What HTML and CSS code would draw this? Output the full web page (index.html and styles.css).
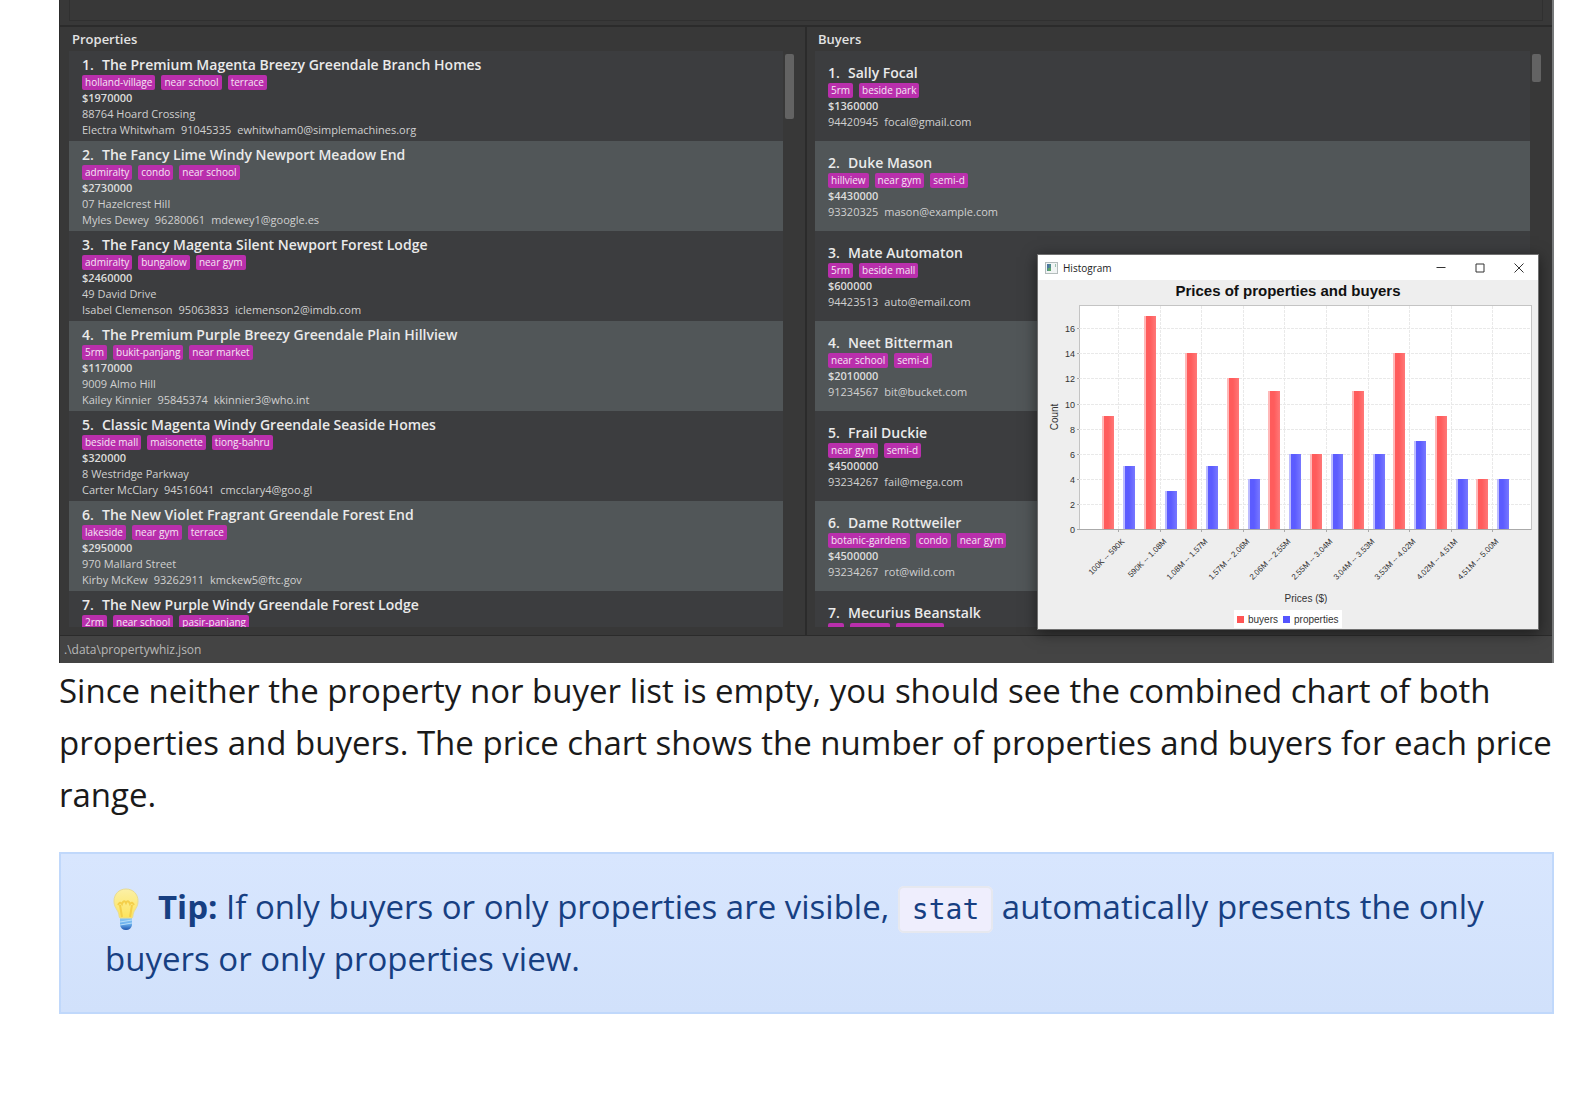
FILE: index.html
```html
<!DOCTYPE html>
<html lang="en">
<head>
<meta charset="utf-8">
<title>PropertyWhiz User Guide</title>
<link rel="stylesheet" href="styles.css">
</head>
<body>
<main class="page">
<section class="app">
  <div class="result"><div class="result-box"></div></div>
  <div class="panels">
    <section class="panel">
      <h2 class="panel-title">Properties</h2>
      <div class="list-wrap">
        <ol class="list">
          <li class="row"><h3 class="name"><span class="num">1.</span>The Premium Magenta Breezy Greendale Branch Homes</h3><div class="tags"><span class="tag">holland-village</span><span class="tag">near school</span><span class="tag">terrace</span></div><p class="price">$1970000</p><p class="line">88764 Hoard Crossing</p><p class="line"><span>Electra Whitwham</span><span>91045335</span><span>ewhitwham0@simplemachines.org</span></p></li>
          <li class="row"><h3 class="name"><span class="num">2.</span>The Fancy Lime Windy Newport Meadow End</h3><div class="tags"><span class="tag">admiralty</span><span class="tag">condo</span><span class="tag">near school</span></div><p class="price">$2730000</p><p class="line">07 Hazelcrest Hill</p><p class="line"><span>Myles Dewey</span><span>96280061</span><span>mdewey1@google.es</span></p></li>
          <li class="row"><h3 class="name"><span class="num">3.</span>The Fancy Magenta Silent Newport Forest Lodge</h3><div class="tags"><span class="tag">admiralty</span><span class="tag">bungalow</span><span class="tag">near gym</span></div><p class="price">$2460000</p><p class="line">49 David Drive</p><p class="line"><span>Isabel Clemenson</span><span>95063833</span><span>iclemenson2@imdb.com</span></p></li>
          <li class="row"><h3 class="name"><span class="num">4.</span>The Premium Purple Breezy Greendale Plain Hillview</h3><div class="tags"><span class="tag">5rm</span><span class="tag">bukit-panjang</span><span class="tag">near market</span></div><p class="price">$1170000</p><p class="line">9009 Almo Hill</p><p class="line"><span>Kailey Kinnier</span><span>95845374</span><span>kkinnier3@who.int</span></p></li>
          <li class="row"><h3 class="name"><span class="num">5.</span>Classic Magenta Windy Greendale Seaside Homes</h3><div class="tags"><span class="tag">beside mall</span><span class="tag">maisonette</span><span class="tag">tiong-bahru</span></div><p class="price">$320000</p><p class="line">8 Westridge Parkway</p><p class="line"><span>Carter McClary</span><span>94516041</span><span>cmcclary4@goo.gl</span></p></li>
          <li class="row"><h3 class="name"><span class="num">6.</span>The New Violet Fragrant Greendale Forest End</h3><div class="tags"><span class="tag">lakeside</span><span class="tag">near gym</span><span class="tag">terrace</span></div><p class="price">$2950000</p><p class="line">970 Mallard Street</p><p class="line"><span>Kirby McKew</span><span>93262911</span><span>kmckew5@ftc.gov</span></p></li>
          <li class="row"><h3 class="name"><span class="num">7.</span>The New Purple Windy Greendale Forest Lodge</h3><div class="tags"><span class="tag">2rm</span><span class="tag">near school</span><span class="tag">pasir-panjang</span></div><p class="price"></p><p class="line"></p><p class="line"></p></li>
        </ol>
        <div class="scroll"><div class="thumb thumb-long"></div></div>
      </div>
    </section>
    <section class="panel">
      <h2 class="panel-title">Buyers</h2>
      <div class="list-wrap">
        <ol class="list">
          <li class="row"><h3 class="name"><span class="num">1.</span>Sally Focal</h3><div class="tags"><span class="tag">5rm</span><span class="tag">beside park</span></div><p class="price">$1360000</p><p class="line"><span>94420945</span><span>focal@gmail.com</span></p></li>
          <li class="row"><h3 class="name"><span class="num">2.</span>Duke Mason</h3><div class="tags"><span class="tag">hillview</span><span class="tag">near gym</span><span class="tag">semi-d</span></div><p class="price">$4430000</p><p class="line"><span>93320325</span><span>mason@example.com</span></p></li>
          <li class="row"><h3 class="name"><span class="num">3.</span>Mate Automaton</h3><div class="tags"><span class="tag">5rm</span><span class="tag">beside mall</span></div><p class="price">$600000</p><p class="line"><span>94423513</span><span>auto@email.com</span></p></li>
          <li class="row"><h3 class="name"><span class="num">4.</span>Neet Bitterman</h3><div class="tags"><span class="tag">near school</span><span class="tag">semi-d</span></div><p class="price">$2010000</p><p class="line"><span>91234567</span><span>bit@bucket.com</span></p></li>
          <li class="row"><h3 class="name"><span class="num">5.</span>Frail Duckie</h3><div class="tags"><span class="tag">near gym</span><span class="tag">semi-d</span></div><p class="price">$4500000</p><p class="line"><span>93234267</span><span>fail@mega.com</span></p></li>
          <li class="row"><h3 class="name"><span class="num">6.</span>Dame Rottweiler</h3><div class="tags"><span class="tag">botanic-gardens</span><span class="tag">condo</span><span class="tag">near gym</span></div><p class="price">$4500000</p><p class="line"><span>93234267</span><span>rot@wild.com</span></p></li>
          <li class="row"><h3 class="name"><span class="num">7.</span>Mecurius Beanstalk</h3><div class="tags"><span class="tag tag-a"></span><span class="tag tag-b"></span><span class="tag tag-c"></span></div><p class="price"></p><p class="line"></p></li>
        </ol>
        <div class="scroll"><div class="thumb thumb-short"></div></div>
      </div>
    </section>
  </div>
  <footer class="status">.\data\propertywhiz.json</footer>

  <div class="window">
    <header class="titlebar">
      <svg class="app-icon" width="13" height="12" viewBox="0 0 13 12"><rect x=".5" y=".5" width="12" height="11" fill="#f1f4f4" stroke="#b4bcbc"/><rect x="2" y="2" width="4" height="7" fill="#4f8a8c"/><rect x="2" y="2" width="2" height="4" fill="#4c76a0"/><rect x="3" y="6" width="3" height="3" fill="#5fa56a"/><rect x="10" y="2" width="1" height="3" fill="#9cc0ae"/></svg>
      <span class="titlebar-text">Histogram</span>
      <button class="win-btn" aria-label="Minimize"><svg width="10" height="10" viewBox="0 0 10 10"><path d="M.5 4.500h9"/></svg></button>
      <button class="win-btn" aria-label="Maximize"><svg width="10" height="10" viewBox="0 0 10 10"><path d="M1 1h8v8H1z"/></svg></button>
      <button class="win-btn" aria-label="Close"><svg width="10" height="10" viewBox="0 0 10 10"><path d="M.5.5l9 9M9.5.5l-9 9"/></svg></button>
    </header>
    <svg class="chart" viewBox="0 0 500 349" id="chart"></svg>
  </div>
</section>

<p class="text">Since neither the property nor buyer list is empty, you should see the combined chart of both properties and buyers. The price chart shows the number of properties and buyers for each price range.</p>

<aside class="tip"><svg class="bulb" width="42" height="42" viewBox="0 0 42 42"><defs><linearGradient id="glass" x1="0" y1="0" x2="0" y2="1"><stop offset="0" stop-color="#fbf0a6"/><stop offset="1" stop-color="#fde45c"/></linearGradient><linearGradient id="base" x1="0" y1="0" x2="0" y2="1"><stop offset="0" stop-color="#8cc8f4"/><stop offset=".5" stop-color="#6bb0ee"/><stop offset="1" stop-color="#1f56ae"/></linearGradient></defs><path d="M15 30h12v7q-1 5-6 5t-6-5z" fill="url(#base)"/><path d="M15 34l12-2M15 37l12-2" stroke="#b9dff8" fill="none"/><path d="M21 1C14 1 9 6 9 13c0 6 3 8 4.500 12 .7 2 .5 5 1.500 5h12c1 0 .8-3 1.500-5C30 21 33 19 33 13 33 6 28 1 21 1z" fill="url(#glass)" stroke="#e8dc94"/><path d="M17 29l-2-12M25 29l2-12M13 17q2-4 4-1 2-5 4-1 2-4 4 1 2-3 4 1" fill="none" stroke="#f4cf4a" stroke-width="2"/></svg><strong>Tip:</strong> If only buyers or only properties are visible, <code>stat</code> automatically presents the only buyers or only properties view.</aside>
</main>
<script src="chart.js"></script>
</body>
</html>
```
FILE: styles.css
```css
* { box-sizing: border-box; }
body {
  margin: 0;
  background: #fff;
  color: #1a1a1a;
  font-family: "Open Sans", "Noto Sans", sans-serif;
}
h2, h3, p, ol { margin: 0; padding: 0; }
.page { padding: 0 41px 84px 59px; }

.app {
  position: relative;
  display: flex;
  flex-direction: column;
  background: #383838;
  border-left: 1px solid #2c2c2c;
  border-right: 2px solid #77797a;
}
.result {
  padding: 0 9px 4px;
  border-bottom: 2px solid #2b2b2b;
}
.result-box {
  height: 21px;
  border: 1px solid #303030;
  border-top: 0;
}
.panels {
  display: grid;
  grid-template-columns: 745fr 747fr;
  border-bottom: 1px solid #2b2b2b;
}
.panel { padding: 0 9px 8px; min-width: 0; }
.panel + .panel { padding-left: 8px; border-left: 2px solid #2b2b2b; }
.panel-title {
  padding: 0 3px;
  font-size: 13px;
  font-weight: 600;
  line-height: 24px;
  color: #e3e3e3;
}
.list-wrap { display: flex; gap: 2px; height: 576px; overflow: hidden; }
.list { flex: 1; list-style: none; min-width: 0; overflow: hidden; }
.row {
  display: flex;
  flex-direction: column;
  justify-content: center;
  height: 90px;
  padding: 0 13px;
  background: #3c3d3f;
}
.row:nth-child(even) { background: #515658; }
.name {
  font-size: 14px;
  font-weight: 600;
  line-height: 21px;
  color: #eaeaea;
  white-space: nowrap;
}
.num { display: inline-block; width: 20px; }
.tags { display: flex; gap: 6px; height: 15px; }
.tag {
  padding: 0 3px;
  border-radius: 2px;
  background: #b92fac;
  color: #f6e6f4;
  font-size: 10px;
  line-height: 15px;
}
.tag-a { width: 16px; }
.tag-b { width: 40px; }
.tag-c { width: 48px; }
.price, .line {
  height: 16px;
  font-size: 11px;
  line-height: 16px;
  color: #d0d0d0;
}
.price { font-weight: 600; color: #dcdcdc; }
.line { display: flex; gap: 6px; }
.scroll { width: 11px; padding-top: 3px; }
.thumb { width: 9px; border-radius: 2px; background: #636363; }
.thumb-long { height: 65px; }
.thumb-short { height: 28px; }
.status {
  padding: 0 4px;
  background: #444;
  color: #b8b8b8;
  font-size: 12px;
  line-height: 27px;
}

.window {
  position: absolute;
  right: 13px;
  bottom: 33px;
  width: 502px;
  border: 1px solid #707070;
  background: #eee;
  box-shadow: 0 3px 14px rgba(0, 0, 0, .5);
}
.titlebar {
  display: flex;
  align-items: center;
  height: 25px;
  padding-left: 7px;
  background: #fff;
}
.titlebar-text { flex: 1; padding-left: 5px; font-size: 10px; color: #222; }
.win-btn {
  display: grid;
  place-items: center;
  width: 39px;
  height: 25px;
  padding: 0;
  border: 0;
  background: none;
}
.win-btn svg { fill: none; stroke: #333; }
.chart { display: block; width: 100%; font-family: "Liberation Sans", Arial, sans-serif; fill: #333; }

.text {
  padding-top: 2px;
  font-size: 33px;
  line-height: 52px;
}
.tip {
  margin-top: 31px;
  padding: 27px 44px;
  border: 2px solid #c0d8fb;
  background: linear-gradient(#d8e6fe, #d1e1fb);
  color: #173f82;
  font-size: 33px;
  line-height: 52px;
}
.tip strong { font-weight: 700; }
.bulb { margin-right: 11px; vertical-align: -11px; }
code {
  padding: 5px 12px;
  border: 2px solid #e6e8ef;
  border-radius: 6px;
  background: #efeefd;
  font-family: "DejaVu Sans Mono", monospace;
  font-size: 28px;
  line-height: 1;
}
```
FILE: chart.js
```js
const buyers = [9, 17, 14, 12, 11, 6, 11, 14, 9, 4];
const properties = [5, 3, 5, 4, 6, 6, 6, 7, 4, 4];
const bounds = ["100K", "590K", "1.08M", "1.57M", "2.06M", "2.55M", "3.04M", "3.53M", "4.02M", "4.51M", "5.00M"];
const left = 41, right = 493, top_ = 25, base = 249, unit = 12.55;
const x = i => Math.round(80 + i * 41.6);
const y = v => Math.round(base - v * unit);

let out = `<defs>
<linearGradient id="red"><stop offset=".15" stop-color="#ffb9b9"/><stop offset=".16" stop-color="#ff5c5c"/><stop offset=".5" stop-color="#ff5c5c"/><stop offset="1" stop-color="#ff7878"/></linearGradient>
<linearGradient id="blue"><stop offset=".15" stop-color="#bcbcff"/><stop offset=".16" stop-color="#5c5cff"/><stop offset=".5" stop-color="#5c5cff"/><stop offset="1" stop-color="#7878ff"/></linearGradient>
</defs>
<rect width="500" height="349" fill="#eee"/>
<rect x="${left}.5" y="${top_}.5" width="${right - left}" height="${base - top_}" fill="#fff" stroke="#c4c4c4"/>
<text x="250" y="16" text-anchor="middle" font-size="15" font-weight="700" fill="#111">Prices of properties and buyers</text>`;

for (let v = 0; v <= 16; v += 2) {
  if (v) out += `<path d="M${left} ${y(v)}.5H${right}" stroke="#e9e9e9" stroke-dasharray="3 1"/>`;
  out += `<path d="M${left - 2} ${y(v)}.5h2" stroke="#aaa"/><text x="37" y="${y(v) + 4}" text-anchor="end" font-size="9">${v}</text>`;
}
buyers.forEach((b, i) => {
  const c = x(i);
  out += `<path d="M${c}.5 ${top_ + 1}V${base}" stroke="#e9e9e9" stroke-dasharray="3 1"/>
<path d="M${c}.5 ${base}v3" stroke="#aaa"/>
<rect x="${c - 16}" y="${y(b)}" width="12" height="${base - y(b)}" fill="url(#red)"/>
<rect x="${c + 5}" y="${y(properties[i])}" width="12" height="${base - y(properties[i])}" fill="url(#blue)"/>
<text transform="translate(${c + 7} 262) rotate(-45)" text-anchor="end" font-size="8">${bounds[i]} -- ${bounds[i + 1]}</text>`;
});
out += `<path d="M${left} ${base}.5H${right}" stroke="#aaa"/>
<text transform="translate(20 137) rotate(-90)" text-anchor="middle" font-size="10">Count</text>
<text x="268" y="322" text-anchor="middle" font-size="10">Prices ($)</text>
<rect x="196" y="330" width="108" height="18" fill="#fff"/>
<rect x="199" y="336" width="7" height="7" fill="#ff5555"/><text x="210" y="343" font-size="10">buyers</text>
<rect x="245" y="336" width="7" height="7" fill="#5555ff"/><text x="256" y="343" font-size="10">properties</text>`;
document.getElementById("chart").innerHTML = out;
```
